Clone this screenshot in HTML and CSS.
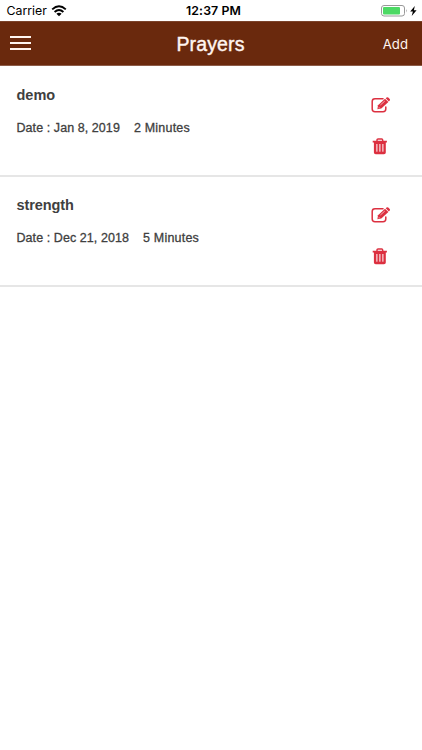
FILE: index.html
```html
<!DOCTYPE html>
<html lang="en">
<head>
<meta charset="utf-8">
<title>Prayers</title>
<link rel="stylesheet" href="styles.css">
</head>
<body>
<svg class="symbols" aria-hidden="true">
  <symbol id="edit" viewBox="0 0 20 16">
    <path d="M12 1.7H4Q1.2 1.7 1.2 4.4V12Q1.2 14.7 4 14.7H12Q14.8 14.7 14.8 12V10" fill="none" stroke="currentColor" stroke-width="1.5" stroke-linecap="round"/>
    <path d="M6.4 12.2L7 8.2L14 1.7L17.4 5L10.3 11.6Z" fill="currentColor"/>
    <path d="M14.7 1.2L15.6 .4Q16.5-.2 17.3.6L18.7 1.9Q19.4 2.7 18.7 3.5L17.9 4.4Z" fill="currentColor"/>
    <path d="M9.4 8L13.8 4M7.6 10.8L8.6 10.7" stroke="#fff" stroke-width=".6"/>
  </symbol>
  <symbol id="trash" viewBox="0 0 16 17">
    <path d="M5 3V1.9Q5 1 6 1H9.7Q10.7 1 10.7 1.9V3" fill="none" stroke="currentColor" stroke-width="1.4"/>
    <path d="M.7 2.8H14.9V4.6H13.8V14.4Q13.8 16.2 12 16.2H3.7Q1.9 16.2 1.9 14.4V4.6H.7Z" fill="currentColor"/>
    <path d="M4.9 6V13.7M7.9 6V13.7M10.9 6V13.7" stroke="#fff" stroke-width="1"/>
  </symbol>
</svg>
<header class="status">
  <div class="carrier"><span>Carrier</span>
    <svg class="wifi" width="16" height="12" viewBox="0 0 16 12"><g fill="none" stroke="#000" stroke-width="1.9"><path d="M1.2 4.4Q8-1.7 14.8 4.4"/><path d="M3.6 7Q8 3 12.4 7"/></g><path d="M5.4 8.7Q8 6.6 10.6 8.7L8 11.3Z"/></svg>
  </div>
  <time class="clock">12:37 PM</time>
  <div class="power">
    <svg width="38" height="14" viewBox="0 0 38 14"><rect x=".5" y="1.5" width="23" height="10.5" rx="2.5" fill="#fff" stroke="#999"/><rect x="2" y="3" width="17" height="7.5" rx="1" fill="#4cd964"/><path d="M25 5Q26.5 6.7 25 8.5Z" fill="#999"/><path d="M33.8 2L29.2 7.5H31.9L30.7 12L35.6 6.2H32.9Z"/></svg>
  </div>
</header>
<nav class="bar">
  <div class="menu"><i></i><i></i><i></i></div>
  <h1>Prayers</h1>
  <span class="add">Add</span>
</nav>
<main>
  <article class="row">
    <div class="details"><h2 class="demo">demo</h2><p><span>Date : Jan 8, 2019</span><span>2 Minutes</span></p></div>
    <div class="actions"><svg class="edit"><use href="#edit"/></svg><svg class="trash"><use href="#trash"/></svg></div>
  </article>
  <article class="row">
    <div class="details"><h2>strength</h2><p><span>Date : Dec 21, 2018</span><span>5 Minutes</span></p></div>
    <div class="actions"><svg class="edit"><use href="#edit"/></svg><svg class="trash"><use href="#trash"/></svg></div>
  </article>
</main>
</body>
</html>
```
FILE: styles.css
```css
* { box-sizing: border-box; }
body { margin: 0; background: #fff; font-family: "Liberation Sans", Arial, sans-serif; color: #404040; }
svg { display: block; }
.symbols { display: none; }
.status { display: grid; grid-template-columns: 1fr auto 1fr; height: 21px; padding: 1px 3px 0 6.5px; align-items: center; font: 12.3px/20px Inter, sans-serif; color: #000; }
.carrier { display: flex; align-items: center; gap: 4px; }
.clock { font-weight: 600; letter-spacing: .1px; padding-left: 1.5px; }
.power { display: flex; justify-content: flex-end; }
.bar { display: grid; grid-template-columns: 1fr auto 1fr; align-items: center; height: 45px; padding: 0 14px 0 10px; background: #6a290d; border-top: 1px solid #7b432b; border-bottom: 1px solid #8d5c48; color: #fff5f0; }
.menu { display: flex; flex-direction: column; gap: 4px; width: 21px; padding-bottom: 1px; }
.menu i { height: 2px; background: #fff5f0; }
h1 { margin: 0; padding-left: 3px; font-size: 19.5px; line-height: 24px; font-weight: 400; letter-spacing: .15px; -webkit-text-stroke: .4px; }
.add { text-align: right; font: 13.2px/20px Inter, sans-serif; }
.row { display: flex; justify-content: space-between; height: 110px; padding: 19px 31px 0 16.5px; border-bottom: 2px solid #e6e6e6; }
.row:first-child { height: 111px; padding-top: 20px; }
h2 { margin: 0; font-size: 14.5px; line-height: 18px; font-weight: 700; letter-spacing: -.1px; }
.demo { letter-spacing: 0; }
p { display: flex; gap: 14px; margin: 16px 0 0; font-size: 12.5px; line-height: 16px; letter-spacing: .07px; -webkit-text-stroke: .3px; }
p span + span { letter-spacing: .2px; }
.actions { display: flex; flex-direction: column; gap: 25px; padding-top: 11px; color: #dc3040; }
.edit { width: 20px; height: 16px; }
.trash { width: 16px; height: 17px; margin-left: .5px; }
```
